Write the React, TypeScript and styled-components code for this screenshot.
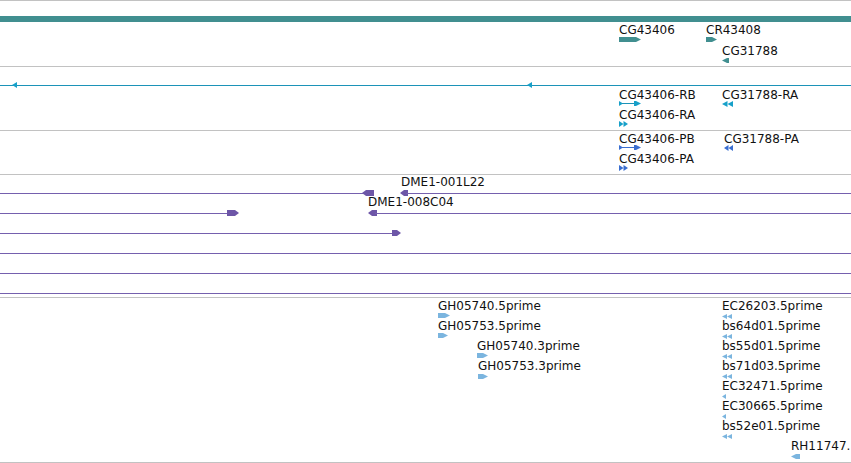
import React from 'react';
import styled, { createGlobalStyle } from 'styled-components';

const GlobalStyle = createGlobalStyle`
  html, body {
    margin: 0;
    padding: 0;
    background: #ffffff;
  }
  body {
    font-family: 'DejaVu Sans', 'Liberation Sans', sans-serif;
    overflow: hidden;
  }
`;

const TEAL = '#418f90';
const CYAN = '#17a0c9';
const CYAN_LINE = '#1c93b8';
const BLUE = '#3a6ed0';
const PURPLE = '#6d56a7';
const PURPLE_LINE = '#7560ae';
const EST = '#7bb5df';

const Browser = styled.div`
  width: 851px;
  display: flex;
  flex-direction: column;
  border-top: 1px solid #c2c2c2;
  overflow: hidden;
`;

const Track = styled.div<{ $height: number }>`
  position: relative;
  height: ${p => p.$height}px;
  border-bottom: 1px solid #c2c2c2;
  overflow: hidden;
`;

const Canvas = styled.svg`
  position: absolute;
  inset: 0;
  width: 851px;
  height: 100%;
  shape-rendering: crispEdges;
`;

const Label = styled.span`
  position: absolute;
  font-size: 12px;
  line-height: 14px;
  color: #111;
  white-space: nowrap;
`;

type Dir = 'l' | 'r';

type Glyph =
  | { kind: 'block'; x1: number; x2: number; y: number; h: number; dir: Dir; tip?: number }
  | { kind: 'chev'; x: number; y: number; h: number; n: number; dir: Dir; w?: number }
  | { kind: 'line'; x1: number; x2: number; y: number };

type Feature = { text: string; x: number; y: number };

type TrackData = {
  height: number;
  color: string;
  lineColor?: string;
  labels: Feature[];
  glyphs: Glyph[];
};

const drawGlyph = (g: Glyph, color: string, lineColor: string, i: number) => {
  if (g.kind === 'line') {
    return <line key={i} x1={g.x1} x2={g.x2} y1={g.y + 0.5} y2={g.y + 0.5} stroke={lineColor} strokeWidth={1} />;
  }
  if (g.kind === 'block') {
    const { x1, x2, y, h, dir } = g;
    const t = Math.min(g.tip ?? 5, x2 - x1);
    const m = y + h / 2;
    const pts =
      dir === 'r'
        ? `${x1},${y} ${x2 - t},${y} ${x2},${m} ${x2 - t},${y + h} ${x1},${y + h}`
        : `${x1 + t},${y} ${x2},${y} ${x2},${y + h} ${x1 + t},${y + h} ${x1},${m}`;
    return <polygon key={i} points={pts} fill={color} shapeRendering="auto" />;
  }
  const w = g.w ?? 5;
  const tris = Array.from({ length: g.n }, (_, k) => {
    const x = g.x + k * w;
    const m = g.y + g.h / 2;
    const pts =
      g.dir === 'r'
        ? `${x},${g.y} ${x + w},${m} ${x},${g.y + g.h}`
        : `${x + w},${g.y} ${x},${m} ${x + w},${g.y + g.h}`;
    return <polygon key={k} points={pts} fill={color} shapeRendering="auto" />;
  });
  return <g key={i}>{tris}</g>;
};

const tracks: TrackData[] = [
  {
    height: 65,
    color: TEAL,
    labels: [
      { text: 'CG43406', x: 619, y: 22 },
      { text: 'CR43408', x: 706, y: 22 },
      { text: 'CG31788', x: 722, y: 43 },
    ],
    glyphs: [
      { kind: 'block', x1: 0, x2: 851, y: 15, h: 6, dir: 'r', tip: 0 },
      { kind: 'block', x1: 619, x2: 641, y: 36, h: 5, dir: 'r' },
      { kind: 'block', x1: 706, x2: 717, y: 36, h: 5, dir: 'r' },
      { kind: 'block', x1: 722, x2: 729, y: 57, h: 5, dir: 'l', tip: 5 },
    ],
  },
  {
    height: 63,
    color: CYAN,
    lineColor: CYAN_LINE,
    labels: [
      { text: 'CG43406-RB', x: 619, y: 21 },
      { text: 'CG31788-RA', x: 722, y: 21 },
      { text: 'CG43406-RA', x: 619, y: 41 },
    ],
    glyphs: [
      { kind: 'line', x1: 0, x2: 851, y: 18 },
      { kind: 'chev', x: 12, y: 15, h: 6, n: 1, dir: 'l' },
      { kind: 'chev', x: 527, y: 15, h: 6, n: 1, dir: 'l' },
      { kind: 'chev', x: 619, y: 34, h: 5, n: 1, dir: 'r', w: 4 },
      { kind: 'line', x1: 622, x2: 636, y: 36 },
      { kind: 'block', x1: 634, x2: 641, y: 34, h: 5, dir: 'r', tip: 5 },
      { kind: 'chev', x: 722, y: 34, h: 6, n: 2, dir: 'l', w: 5.5 },
      { kind: 'chev', x: 619, y: 54, h: 6, n: 2, dir: 'r', w: 4.5 },
    ],
  },
  {
    height: 43,
    color: BLUE,
    labels: [
      { text: 'CG43406-PB', x: 619, y: 1 },
      { text: 'CG31788-PA', x: 724, y: 1 },
      { text: 'CG43406-PA', x: 619, y: 21 },
    ],
    glyphs: [
      { kind: 'chev', x: 619, y: 14, h: 5, n: 1, dir: 'r', w: 4 },
      { kind: 'line', x1: 622, x2: 636, y: 16 },
      { kind: 'block', x1: 634, x2: 641, y: 14, h: 5, dir: 'r', tip: 5 },
      { kind: 'chev', x: 724, y: 14, h: 6, n: 2, dir: 'l', w: 4.5 },
      { kind: 'chev', x: 619, y: 34, h: 6, n: 2, dir: 'r', w: 4.5 },
    ],
  },
  {
    height: 122,
    color: PURPLE,
    lineColor: PURPLE_LINE,
    labels: [
      { text: 'DME1-001L22', x: 401, y: 0 },
      { text: 'DME1-008C04', x: 368, y: 20 },
    ],
    glyphs: [
      { kind: 'line', x1: 0, x2: 364, y: 18 },
      { kind: 'block', x1: 362, x2: 374, y: 15, h: 6, dir: 'l', tip: 4 },
      { kind: 'block', x1: 400, x2: 408, y: 15, h: 6, dir: 'l', tip: 4 },
      { kind: 'line', x1: 406, x2: 851, y: 18 },
      { kind: 'line', x1: 0, x2: 230, y: 38 },
      { kind: 'block', x1: 227, x2: 239, y: 35, h: 6, dir: 'r', tip: 4 },
      { kind: 'block', x1: 368, x2: 377, y: 35, h: 6, dir: 'l', tip: 4 },
      { kind: 'line', x1: 375, x2: 851, y: 38 },
      { kind: 'line', x1: 0, x2: 394, y: 58 },
      { kind: 'block', x1: 392, x2: 401, y: 55, h: 6, dir: 'r', tip: 4 },
      { kind: 'line', x1: 0, x2: 851, y: 78 },
      { kind: 'line', x1: 0, x2: 851, y: 98 },
      { kind: 'line', x1: 0, x2: 851, y: 118 },
    ],
  },
  {
    height: 164,
    color: EST,
    labels: [
      { text: 'GH05740.5prime', x: 438, y: 1 },
      { text: 'GH05753.5prime', x: 438, y: 21 },
      { text: 'GH05740.3prime', x: 477, y: 41 },
      { text: 'GH05753.3prime', x: 478, y: 61 },
      { text: 'EC26203.5prime', x: 722, y: 1 },
      { text: 'bs64d01.5prime', x: 722, y: 21 },
      { text: 'bs55d01.5prime', x: 722, y: 41 },
      { text: 'bs71d03.5prime', x: 722, y: 61 },
      { text: 'EC32471.5prime', x: 722, y: 81 },
      { text: 'EC30665.5prime', x: 722, y: 101 },
      { text: 'bs52e01.5prime', x: 722, y: 121 },
      { text: 'RH11747.', x: 791, y: 141 },
    ],
    glyphs: [
      { kind: 'block', x1: 438, x2: 450, y: 15, h: 5, dir: 'r', tip: 5 },
      { kind: 'block', x1: 438, x2: 448, y: 35, h: 5, dir: 'r', tip: 5 },
      { kind: 'block', x1: 477, x2: 488, y: 55, h: 5, dir: 'r', tip: 5 },
      { kind: 'block', x1: 478, x2: 488, y: 76, h: 5, dir: 'r', tip: 5 },
      { kind: 'chev', x: 722, y: 16, h: 5, n: 2, dir: 'l', w: 5 },
      { kind: 'chev', x: 722, y: 36, h: 5, n: 2, dir: 'l', w: 5 },
      { kind: 'chev', x: 722, y: 56, h: 5, n: 2, dir: 'l', w: 5 },
      { kind: 'chev', x: 722, y: 76, h: 5, n: 2, dir: 'l', w: 5 },
      { kind: 'chev', x: 722, y: 96, h: 5, n: 1, dir: 'l', w: 4 },
      { kind: 'chev', x: 722, y: 116, h: 5, n: 1, dir: 'l', w: 4 },
      { kind: 'chev', x: 722, y: 136, h: 5, n: 2, dir: 'l', w: 5 },
      { kind: 'block', x1: 791, x2: 800, y: 156, h: 5, dir: 'l', tip: 5 },
    ],
  },
];

export default function App() {
  return (
    <>
      <GlobalStyle />
      <Browser>
        {tracks.map((t, ti) => (
          <Track key={ti} $height={t.height}>
            <Canvas viewBox={`0 0 851 ${t.height}`} preserveAspectRatio="xMinYMin slice">
              {t.glyphs.map((g, i) => drawGlyph(g, t.color, t.lineColor ?? t.color, i))}
            </Canvas>
            {t.labels.map(l => (
              <Label key={l.text} style={{ left: l.x, top: l.y }}>
                {l.text}
              </Label>
            ))}
          </Track>
        ))}
      </Browser>
    </>
  );
}
